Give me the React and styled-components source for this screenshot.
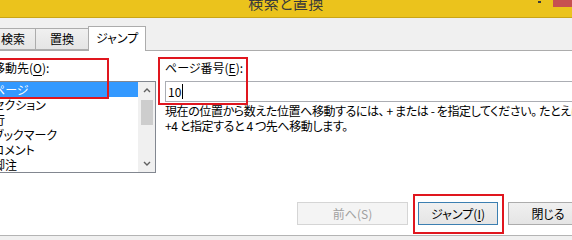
import React from "react";
import styled, { createGlobalStyle } from "styled-components";

const GlobalStyle = createGlobalStyle`
	html, body {
		margin: 0;
		padding: 0;
		width: 572px;
		height: 240px;
		overflow: hidden;
		background: #f0f0f0;
	}
	body {
		font-family: "Noto Sans CJK JP", "Noto Sans", sans-serif;
		font-size: 12px;
		font-feature-settings: "palt";
		color: #000;
	}
`;

const Window = styled.div`
	width: 572px;
	height: 240px;
	display: flex;
	flex-direction: column;
	overflow: hidden;
`;

const TitleBar = styled.div`
	height: 17px;
	background: #ebc31c;
	border-bottom: 1px solid #c9a516;
	display: flex;
	overflow: hidden;
`;

const Side = styled.div`
	flex: 1 1 0;
	display: flex;
	justify-content: flex-end;
	align-items: flex-start;
`;

const Title = styled.div`
	font-size: 15px;
	line-height: 15px;
	margin-top: -5px;
	color: #3a3a3a;
	letter-spacing: 0.5px;
	white-space: nowrap;
`;

const MinDot = styled.div`
	width: 3px;
	height: 2px;
	margin-top: 1px;
	margin-right: 12px;
	background: #3a3a3a;
`;

const CloseBtn = styled.div`
	width: 19px;
	height: 7px;
	background: #c75050;
`;

const TabStrip = styled.div`
	height: 32px;
	display: flex;
	align-items: flex-end;
	border-bottom: 1px solid #acacac;
	margin-left: -10px;
`;

const Tab = styled.div`
	box-sizing: border-box;
	width: ${(p) => p.$w}px;
	height: ${(p) => (p.$active ? 25 : 22)}px;
	margin-left: ${(p) => (p.$first ? 0 : -1)}px;
	margin-bottom: ${(p) => (p.$active ? -1 : 0)}px;
	border: 1px solid #acacac;
	border-bottom: ${(p) => (p.$active ? "none" : "1px solid #acacac")};
	background: ${(p) => (p.$active ? "#fff" : "linear-gradient(#f0f0f0, #e5e5e5)")};
	position: relative;
	z-index: ${(p) => (p.$active ? 1 : 0)};
	text-align: center;
	line-height: ${(p) => (p.$active ? 22 : 20)}px;
	white-space: nowrap;
`;

const Content = styled.div`
	background: #fff;
	padding: 9px 0 10px 0;
	border-bottom: 1px solid #b4b4b4;
	display: flex;
	flex-direction: column;
`;

const MainRow = styled.div`
	display: flex;
	align-items: flex-start;
`;

const LeftCol = styled.div`
	position: relative;
	flex: none;
	width: 166px;
	margin-left: -10px;
`;

const RightCol = styled.div`
	position: relative;
	flex: none;
	width: 440px;
	margin-left: 9px;
`;

const Label = styled.div`
	line-height: 16px;
	padding-left: ${(p) => p.$pad || 0}px;
	white-space: nowrap;
	u {
		text-underline-offset: 2px;
	}
`;

const ListBox = styled.div`
	box-sizing: border-box;
	margin-top: 5px;
	height: 92px;
	border: 1px solid #828790;
	display: flex;
	overflow: hidden;
`;

const Items = styled.div`
	flex: 1;
	min-width: 0;
`;

const Item = styled.div`
	height: 15px;
	line-height: 15px;
	padding-left: 2px;
	white-space: nowrap;
	background: ${(p) => (p.$selected ? "#3399ff" : "transparent")};
	color: ${(p) => (p.$selected ? "#fff" : "#000")};
`;

const ScrollBar = styled.div`
	width: 17px;
	flex: none;
	background: #f0f0f0;
	display: flex;
	flex-direction: column;
	align-items: center;
`;

const ArrowBtn = styled.div`
	height: 17px;
	width: 17px;
	display: flex;
	align-items: center;
	justify-content: center;
`;

const Thumb = styled.div`
	width: 12px;
	height: 25px;
	margin-top: 1px;
	background: #cdcdcd;
`;

const Track = styled.div`
	flex: 1;
`;

const TextInput = styled.div`
	box-sizing: border-box;
	margin-top: 5px;
	height: 21px;
	border: 1px solid #abadb3;
	padding-left: 2px;
	line-height: 19px;
	display: flex;
	align-items: center;
`;

const Caret = styled.span`
	display: inline-block;
	width: 1px;
	height: 15px;
	background: #000;
	margin-left: 1px;
`;

const Help = styled.div`
	margin-top: 1px;
	line-height: 15px;
	letter-spacing: -0.4px;
	white-space: nowrap;
`;

const ButtonRow = styled.div`
	margin-top: 29px;
	margin-right: -16px;
	display: flex;
	justify-content: flex-end;
	gap: 10px;
`;

const Button = styled.div`
	position: relative;
	box-sizing: border-box;
	width: ${(p) => p.$w}px;
	height: 23px;
	line-height: 21px;
	text-align: center;
	white-space: nowrap;
	border: 1px solid ${(p) => (p.$disabled ? "#d5d5d5" : p.$focus ? "#3c7fb1" : "#acacac")};
	background: ${(p) => (p.$disabled ? "#f4f4f4" : "linear-gradient(#f0f0f0, #e5e5e5)")};
	color: ${(p) => (p.$disabled ? "#a0a0a0" : "#000")};
	u {
		text-underline-offset: 2px;
	}
`;

const Highlight = styled.div`
	position: absolute;
	box-sizing: border-box;
	left: ${(p) => p.$x}px;
	top: ${(p) => p.$y}px;
	width: ${(p) => p.$w}px;
	height: ${(p) => p.$h}px;
	border: 2px solid #e0161e;
	pointer-events: none;
	z-index: 2;
`;

const Chevron = ({ down }) => (
	<svg width="8" height="5" viewBox="0 0 8 5">
		<path
			d={down ? "M1 1 L4 4 L7 1" : "M1 4 L4 1 L7 4"}
			fill="none"
			stroke="#606060"
			strokeWidth="1.4"
		/>
	</svg>
);

const items = ["ページ", "セクション", "行", "ブックマーク", "コメント", "脚注"];

function App() {
	return (
		<Window>
			<GlobalStyle />
			<TitleBar>
				<Side />
				<Title>検索と置換</Title>
				<Side>
					<MinDot />
					<CloseBtn />
				</Side>
			</TitleBar>
			<TabStrip>
				<Tab $w={46} $first>
					検索
				</Tab>
				<Tab $w={54}>置換</Tab>
				<Tab $w={58} $active>
					ジャンプ
				</Tab>
			</TabStrip>
			<Content>
				<MainRow>
					<LeftCol>
						<Label $pad={3}>
							移動先(<u>O</u>):
						</Label>
						<ListBox>
							<Items>
								{items.map((it, i) => (
									<Item key={it} $selected={i === 0}>
										{it}
									</Item>
								))}
							</Items>
							<ScrollBar>
								<ArrowBtn>
									<Chevron />
								</ArrowBtn>
								<Thumb />
								<Track />
								<ArrowBtn>
									<Chevron down />
								</ArrowBtn>
							</ScrollBar>
						</ListBox>
						<Highlight $x={-2} $y={-2} $w={121} $h={41} />
					</LeftCol>
					<RightCol>
						<Label>
							ページ番号(<u>E</u>):
						</Label>
						<TextInput>
							10
							<Caret />
						</TextInput>
						<Help>
							現在の位置から数えた位置へ移動するには、 + または - を指定してください。 たとえば
							<br />
							+4 と指定すると 4 つ先へ移動します。
						</Help>
						<Highlight $x={-7} $y={-3} $w={90} $h={48} />
					</RightCol>
				</MainRow>
				<ButtonRow>
					<Button $w={111} $disabled>
						前へ(S)
					</Button>
					<Button $w={80} $focus>
						ジャンプ(<u>I</u>)
						<Highlight $x={-6} $y={-9} $w={91} $h={40} />
					</Button>
					<Button $w={80}>閉じる</Button>
				</ButtonRow>
			</Content>
		</Window>
	);
}

export default App;
